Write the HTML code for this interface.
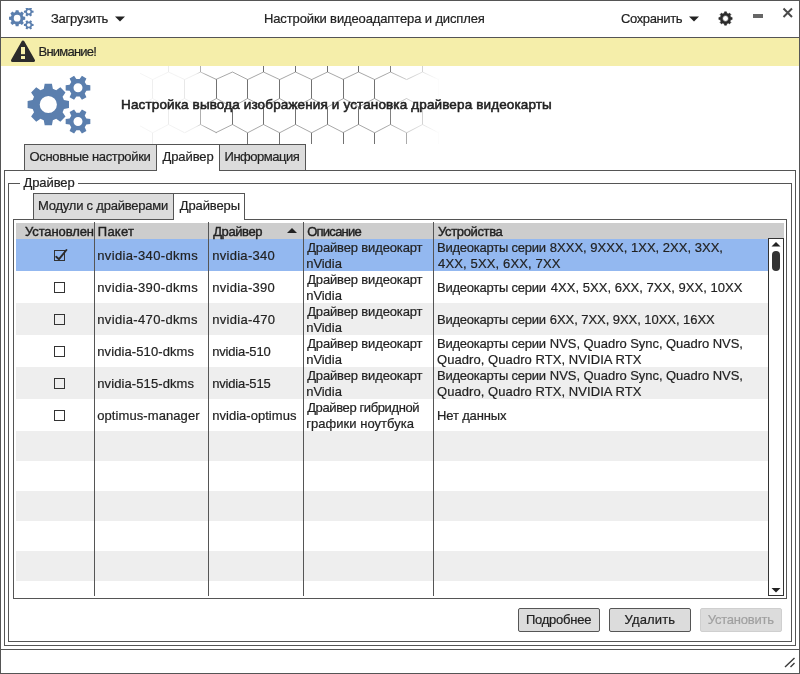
<!DOCTYPE html>
<html lang="ru">
<head>
<meta charset="utf-8">
<title>Настройки видеоадаптера и дисплея</title>
<style>
html,body{margin:0;padding:0;}
body{width:800px;height:674px;overflow:hidden;background:#fff;position:relative;
  font-family:"Liberation Sans",sans-serif;font-size:13px;color:#222;}
.abs{position:absolute;}
.t{position:absolute;white-space:nowrap;line-height:16px;height:16px;-webkit-text-stroke:0.2px #222;}
.ln{position:absolute;background:#555;}
.bx{position:absolute;box-sizing:border-box;border:1px solid #555;}
#win{position:absolute;left:0;top:0;width:798px;height:672px;border:1px solid #555;}
#warn{position:absolute;left:1px;top:38px;width:798px;height:28px;background:#f5eeaa;}
.tab{position:absolute;box-sizing:border-box;border:1px solid #555;background:#dcdcdc;}
.tab.act{background:#fff;border-bottom:none;}
.btn{position:absolute;box-sizing:border-box;border:1px solid #555;background:#dcdcdc;height:24px;top:608px;border-radius:2px;}
.row{position:absolute;left:16px;width:752px;}
.cb{position:absolute;left:54px;width:9px;height:9px;border:1px solid #333;}
</style>
</head>
<body>
<div id="root" style="position:absolute;left:0;top:0;width:800px;height:674px;will-change:transform;">
<div id="win"></div>
<svg class="abs" style="left:140px;top:66px" width="330" height="78" viewBox="140 66 330 78">
<defs><linearGradient id="hf" x1="140" x2="470" y1="0" y2="0" gradientUnits="userSpaceOnUse"><stop offset="0.03" stop-color="#fff" stop-opacity="0.1"/><stop offset="0.12" stop-color="#fff" stop-opacity="0.13"/><stop offset="0.17" stop-color="#fff" stop-opacity="0.2"/><stop offset="0.2" stop-color="#fff" stop-opacity="0.9"/><stop offset="0.742" stop-color="#fff" stop-opacity="0.9"/><stop offset="0.833" stop-color="#fff" stop-opacity="0.4"/><stop offset="0.909" stop-color="#fff" stop-opacity="0"/></linearGradient>
<mask id="hm" maskUnits="userSpaceOnUse" x="140" y="66" width="330" height="78"><rect x="140" y="66" width="330" height="78" fill="url(#hf)"/></mask></defs>
<g mask="url(#hm)" fill="none" stroke="#505050"><path d="M-21.5 60.0L-21.5 72.0M-5.5 79.5L-5.5 98.5M-21.5 107.0L-21.5 124.5M-5.5 132.7L-5.5 150.0M10.5 60.0L10.5 72.0M26.5 79.5L26.5 98.5M10.5 107.0L10.5 124.5M26.5 132.7L26.5 150.0M41.5 60.0L41.5 72.0M57.5 79.5L57.5 98.5M41.5 107.0L41.5 124.5M57.5 132.7L57.5 150.0M73.5 60.0L73.5 72.0M89.5 79.5L89.5 98.5M73.5 107.0L73.5 124.5M89.5 132.7L89.5 150.0M105.5 60.0L105.5 72.0M121.5 79.5L121.5 98.5M105.5 107.0L105.5 124.5M121.5 132.7L121.5 150.0M137.5 60.0L137.5 72.0M152.5 79.5L152.5 98.5M137.5 107.0L137.5 124.5M152.5 132.7L152.5 150.0M168.5 60.0L168.5 72.0M184.5 79.5L184.5 98.5M168.5 107.0L168.5 124.5M200.5 60.0L200.5 72.0M216.5 79.5L216.5 98.5M200.5 107.0L200.5 124.5M247.5 79.5L247.5 98.5M232.5 107.0L232.5 124.5M247.5 132.7L247.5 150.0M263.5 60.0L263.5 72.0M279.5 79.5L279.5 98.5M263.5 107.0L263.5 124.5M279.5 132.7L279.5 150.0M295.5 60.0L295.5 72.0M311.5 79.5L311.5 98.5M295.5 107.0L295.5 124.5M311.5 132.7L311.5 150.0M327.5 60.0L327.5 72.0M343.5 79.5L343.5 98.5M327.5 107.0L327.5 124.5M343.5 132.7L343.5 150.0M358.5 60.0L358.5 72.0M374.5 79.5L374.5 98.5M358.5 107.0L358.5 124.5M374.5 132.7L374.5 150.0M390.5 60.0L390.5 72.0M390.5 107.0L390.5 124.5M406.5 132.7L406.5 150.0M422.5 60.0L422.5 72.0M438.5 79.5L438.5 98.5M422.5 107.0L422.5 124.5M438.5 132.7L438.5 150.0M454.5 60.0L454.5 72.0M469.5 79.5L469.5 98.5M454.5 107.0L454.5 124.5M469.5 132.7L469.5 150.0M485.5 60.0L485.5 72.0M501.5 79.5L501.5 98.5M485.5 107.0L485.5 124.5M501.5 132.7L501.5 150.0M517.5 60.0L517.5 72.0M533.5 79.5L533.5 98.5M517.5 107.0L517.5 124.5M533.5 132.7L533.5 150.0M549.5 60.0L549.5 72.0M564.5 79.5L564.5 98.5M549.5 107.0L549.5 124.5M564.5 132.7L564.5 150.0M580.5 60.0L580.5 72.0M596.5 79.5L596.5 98.5M580.5 107.0L580.5 124.5M596.5 132.7L596.5 150.0" stroke-width="0.9"/><path d="M-21.5 72.0L-5.5 79.5M-21.5 72.0L-37.2 79.5M-5.5 98.5L10.2 107.0M-5.5 98.5L-21.5 107.0M-21.5 124.5L-5.5 132.7M-21.5 124.5L-37.2 132.7M10.5 72.0L26.5 79.5M10.5 72.0L-5.2 79.5M26.5 98.5L42.2 107.0M26.5 98.5L10.5 107.0M10.5 124.5L26.5 132.7M10.5 124.5L-5.2 132.7M41.5 72.0L57.5 79.5M41.5 72.0L25.8 79.5M57.5 98.5L73.2 107.0M57.5 98.5L41.5 107.0M41.5 124.5L57.5 132.7M41.5 124.5L25.8 132.7M73.5 72.0L89.5 79.5M73.5 72.0L57.8 79.5M89.5 98.5L105.2 107.0M89.5 98.5L73.5 107.0M73.5 124.5L89.5 132.7M73.5 124.5L57.8 132.7M105.5 72.0L121.5 79.5M105.5 72.0L89.8 79.5M121.5 98.5L137.2 107.0M121.5 98.5L105.5 107.0M105.5 124.5L121.5 132.7M105.5 124.5L89.8 132.7M137.5 72.0L152.5 79.5M137.5 72.0L120.8 79.5M152.5 98.5L169.2 107.0M152.5 98.5L137.5 107.0M137.5 124.5L152.5 132.7M137.5 124.5L120.8 132.7M168.5 72.0L184.5 79.5M168.5 72.0L152.8 79.5M184.5 98.5L200.2 107.0M184.5 98.5L168.5 107.0M168.5 124.5L184.5 132.7M168.5 124.5L152.8 132.7M200.5 72.0L216.5 79.5M200.5 72.0L184.8 79.5M216.5 98.5L232.2 107.0M216.5 98.5L200.5 107.0M200.5 124.5L216.5 132.7M200.5 124.5L184.8 132.7M232.5 72.0L247.5 79.5M232.5 72.0L215.8 79.5M247.5 98.5L264.2 107.0M247.5 98.5L232.5 107.0M232.5 124.5L247.5 132.7M232.5 124.5L215.8 132.7M263.5 72.0L279.5 79.5M263.5 72.0L247.8 79.5M279.5 98.5L295.2 107.0M279.5 98.5L263.5 107.0M263.5 124.5L279.5 132.7M263.5 124.5L247.8 132.7M295.5 72.0L311.5 79.5M295.5 72.0L279.8 79.5M311.5 98.5L327.2 107.0M311.5 98.5L295.5 107.0M295.5 124.5L311.5 132.7M295.5 124.5L279.8 132.7M327.5 72.0L343.5 79.5M327.5 72.0L311.8 79.5M343.5 98.5L359.2 107.0M343.5 98.5L327.5 107.0M327.5 124.5L343.5 132.7M327.5 124.5L311.8 132.7M358.5 72.0L374.5 79.5M358.5 72.0L342.8 79.5M374.5 98.5L390.2 107.0M374.5 98.5L358.5 107.0M358.5 124.5L374.5 132.7M358.5 124.5L342.8 132.7M390.5 72.0L406.5 79.5M390.5 72.0L374.8 79.5M406.5 98.5L422.2 107.0M406.5 98.5L390.5 107.0M390.5 124.5L406.5 132.7M390.5 124.5L374.8 132.7M422.5 72.0L438.5 79.5M422.5 72.0L406.8 79.5M438.5 98.5L454.2 107.0M438.5 98.5L422.5 107.0M422.5 124.5L438.5 132.7M422.5 124.5L406.8 132.7M454.5 72.0L469.5 79.5M454.5 72.0L437.8 79.5M469.5 98.5L486.2 107.0M469.5 98.5L454.5 107.0M454.5 124.5L469.5 132.7M454.5 124.5L437.8 132.7M485.5 72.0L501.5 79.5M485.5 72.0L469.8 79.5M501.5 98.5L517.2 107.0M501.5 98.5L485.5 107.0M485.5 124.5L501.5 132.7M485.5 124.5L469.8 132.7M517.5 72.0L533.5 79.5M517.5 72.0L501.8 79.5M533.5 98.5L549.2 107.0M533.5 98.5L517.5 107.0M517.5 124.5L533.5 132.7M517.5 124.5L501.8 132.7M549.5 72.0L564.5 79.5M549.5 72.0L532.8 79.5M564.5 98.5L581.2 107.0M564.5 98.5L549.5 107.0M549.5 124.5L564.5 132.7M549.5 124.5L532.8 132.7M580.5 72.0L596.5 79.5M580.5 72.0L564.8 79.5M596.5 98.5L612.2 107.0M596.5 98.5L580.5 107.0M580.5 124.5L596.5 132.7M580.5 124.5L564.8 132.7" stroke-width="0.7" stroke-opacity="0.8"/></g>
</svg>
<div class="ln" style="left:1px;top:37px;width:798px;height:1px;"></div>
<svg class="abs" style="left:8.3px;top:8.4px" width="27" height="24" viewBox="25 81 69 56"><path fill="#5b7fae" fill-rule="evenodd" d="M63.95 99.96 L68.99 100.88 L68.99 108.12 L63.95 109.04 L62.58 112.36 L65.48 116.57 L60.37 121.68 L56.16 118.78 L52.84 120.15 L51.92 125.19 L44.68 125.19 L43.76 120.15 L40.44 118.78 L36.23 121.68 L31.12 116.57 L34.02 112.36 L32.65 109.04 L27.61 108.12 L27.61 100.88 L32.65 99.96 L34.02 96.64 L31.12 92.43 L36.23 87.32 L40.44 90.22 L43.76 88.85 L44.68 83.81 L51.92 83.81 L52.84 88.85 L56.16 90.22 L60.37 87.32 L65.48 92.43 L62.58 96.64Z M56.90 104.50 A8.6 8.6 0 1 0 39.70 104.50 A8.6 8.6 0 1 0 56.90 104.50Z M86.40 84.85 L90.33 85.21 L90.33 90.39 L86.40 90.75 L84.75 93.60 L86.41 97.18 L81.92 99.77 L79.65 96.55 L76.35 96.55 L74.08 99.77 L69.59 97.18 L71.25 93.60 L69.60 90.75 L65.67 90.39 L65.67 85.21 L69.60 84.85 L71.25 82.00 L69.59 78.42 L74.08 75.83 L76.35 79.05 L79.65 79.05 L81.92 75.83 L86.41 78.42 L84.75 82.00Z M82.50 87.80 A4.5 4.5 0 1 0 73.50 87.80 A4.5 4.5 0 1 0 82.50 87.80Z M86.40 118.55 L90.33 118.91 L90.33 124.09 L86.40 124.45 L84.75 127.30 L86.41 130.88 L81.92 133.47 L79.65 130.25 L76.35 130.25 L74.08 133.47 L69.59 130.88 L71.25 127.30 L69.60 124.45 L65.67 124.09 L65.67 118.91 L69.60 118.55 L71.25 115.70 L69.59 112.12 L74.08 109.53 L76.35 112.75 L79.65 112.75 L81.92 109.53 L86.41 112.12 L84.75 115.70Z M82.50 121.50 A4.5 4.5 0 1 0 73.50 121.50 A4.5 4.5 0 1 0 82.50 121.50Z"/></svg>
<svg class="abs" style="left:115px;top:16px" width="10" height="6"><path d="M0 0.5H10L5 5.5Z" fill="#222"/></svg>
<svg class="abs" style="left:689px;top:16px" width="10" height="6"><path d="M0 0.5H10L5 5.5Z" fill="#222"/></svg>
<svg class="abs" style="left:718px;top:11px" width="15" height="15" viewBox="-7.5 -7.5 15 15"><path fill="#2b2b2b" fill-rule="evenodd" stroke="#2b2b2b" stroke-width="0.6" stroke-linejoin="round" d="M5.14 -1.28 L6.63 -1.00 L6.63 1.00 L5.14 1.28 L4.54 2.73 L5.39 3.98 L3.98 5.39 L2.73 4.54 L1.28 5.14 L1.00 6.63 L-1.00 6.63 L-1.28 5.14 L-2.73 4.54 L-3.98 5.39 L-5.39 3.98 L-4.54 2.73 L-5.14 1.28 L-6.63 1.00 L-6.63 -1.00 L-5.14 -1.28 L-4.54 -2.73 L-5.39 -3.98 L-3.98 -5.39 L-2.73 -4.54 L-1.28 -5.14 L-1.00 -6.63 L1.00 -6.63 L1.28 -5.14 L2.73 -4.54 L3.98 -5.39 L5.39 -3.98 L4.54 -2.73Z M2.90 0.00 A2.9 2.9 0 1 0 -2.90 0.00 A2.9 2.9 0 1 0 2.90 0.00Z"/></svg>
<div class="abs" style="left:753px;top:14px;width:10px;height:4px;background:#666;"></div>
<svg class="abs" style="left:782px;top:7px" width="12" height="12"><path d="M1.5 1.5L10 10M10 1.5L1.5 10" stroke="#4a4a4a" stroke-width="2" fill="none"/></svg>
<div id="warn"></div>
<svg class="abs" style="left:11px;top:40px" width="24" height="22" viewBox="0 0 24 22"><path d="M12 2L22.5 20.4H1.5Z" fill="#2b2b2b" stroke="#2b2b2b" stroke-width="3" stroke-linejoin="round"/><rect x="10" y="7" width="4" height="7.2" fill="#f5eeaa"/><rect x="10" y="16" width="4" height="3" fill="#f5eeaa"/></svg>
<svg class="abs" style="left:20px;top:70px" width="80" height="70" viewBox="20 70 80 70"><path fill="#5b7fae" fill-rule="evenodd" d="M63.95 99.96 L68.99 100.88 L68.99 108.12 L63.95 109.04 L62.58 112.36 L65.48 116.57 L60.37 121.68 L56.16 118.78 L52.84 120.15 L51.92 125.19 L44.68 125.19 L43.76 120.15 L40.44 118.78 L36.23 121.68 L31.12 116.57 L34.02 112.36 L32.65 109.04 L27.61 108.12 L27.61 100.88 L32.65 99.96 L34.02 96.64 L31.12 92.43 L36.23 87.32 L40.44 90.22 L43.76 88.85 L44.68 83.81 L51.92 83.81 L52.84 88.85 L56.16 90.22 L60.37 87.32 L65.48 92.43 L62.58 96.64Z M56.90 104.50 A8.6 8.6 0 1 0 39.70 104.50 A8.6 8.6 0 1 0 56.90 104.50Z M86.40 84.85 L90.33 85.21 L90.33 90.39 L86.40 90.75 L84.75 93.60 L86.41 97.18 L81.92 99.77 L79.65 96.55 L76.35 96.55 L74.08 99.77 L69.59 97.18 L71.25 93.60 L69.60 90.75 L65.67 90.39 L65.67 85.21 L69.60 84.85 L71.25 82.00 L69.59 78.42 L74.08 75.83 L76.35 79.05 L79.65 79.05 L81.92 75.83 L86.41 78.42 L84.75 82.00Z M82.50 87.80 A4.5 4.5 0 1 0 73.50 87.80 A4.5 4.5 0 1 0 82.50 87.80Z M86.40 118.55 L90.33 118.91 L90.33 124.09 L86.40 124.45 L84.75 127.30 L86.41 130.88 L81.92 133.47 L79.65 130.25 L76.35 130.25 L74.08 133.47 L69.59 130.88 L71.25 127.30 L69.60 124.45 L65.67 124.09 L65.67 118.91 L69.60 118.55 L71.25 115.70 L69.59 112.12 L74.08 109.53 L76.35 112.75 L79.65 112.75 L81.92 109.53 L86.41 112.12 L84.75 115.70Z M82.50 121.50 A4.5 4.5 0 1 0 73.50 121.50 A4.5 4.5 0 1 0 82.50 121.50Z"/></svg>
<div class="bx" style="left:4px;top:170px;width:792px;height:476px;"></div>
<div class="tab" style="left:24px;top:144px;width:133px;height:27px;"></div>
<div class="tab" style="left:219px;top:144px;width:87px;height:27px;"></div>
<div class="tab act" style="left:156px;top:144px;width:64px;height:27px;"></div>
<div class="bx" style="left:8px;top:183px;width:784px;height:459px;"></div>
<div class="abs" style="left:20px;top:180px;width:58px;height:8px;background:#fff;"></div>
<div class="bx" style="left:13px;top:219px;width:774px;height:380px;"></div>
<div class="tab" style="left:33px;top:193px;width:141px;height:27px;"></div>
<div class="tab act" style="left:173px;top:193px;width:72px;height:27px;"></div>
<div class="abs" style="left:16px;top:223px;width:768px;height:16px;background:#cdcdcd;"></div>
<div class="row" style="top:239px;height:32px;background:#93b8f0;"></div>
<div class="row" style="top:303px;height:32px;background:#eee;"></div>
<div class="row" style="top:367px;height:32px;background:#eee;"></div>
<div class="row" style="top:431px;height:30px;background:#eee;"></div>
<div class="row" style="top:491px;height:30px;background:#eee;"></div>
<div class="row" style="top:551px;height:30px;background:#eee;"></div>
<div class="ln" style="left:94px;top:222px;width:1px;height:374px;"></div>
<div class="ln" style="left:208px;top:222px;width:1px;height:374px;"></div>
<div class="ln" style="left:303px;top:222px;width:1px;height:374px;"></div>
<div class="ln" style="left:433px;top:222px;width:1px;height:374px;"></div>
<svg class="abs" style="left:287px;top:228px" width="10" height="6"><path d="M0 5H10L5 0Z" fill="#222"/></svg>
<div class="cb" style="top:250px;"></div>
<div class="cb" style="top:282px;"></div>
<div class="cb" style="top:314px;"></div>
<div class="cb" style="top:346px;"></div>
<div class="cb" style="top:378px;"></div>
<div class="cb" style="top:410px;"></div>
<svg class="abs" style="left:54px;top:248px" width="14" height="14"><path d="M2.2 8.8L5 11.2L12.4 2" stroke="#2b2b2b" stroke-width="1.9" stroke-linecap="round" stroke-linejoin="round" fill="none"/></svg>
<div class="abs" style="left:768px;top:238px;width:14px;height:356px;border:1px solid #333;border-top:1px solid #333;background:#fff;"></div>
<svg class="abs" style="left:771px;top:242px" width="10" height="5"><path d="M0.5 4.5H9.5L5 0Z" fill="#222"/></svg>
<svg class="abs" style="left:771px;top:588px" width="10" height="5"><path d="M0.5 0H9.5L5 4.5Z" fill="#222"/></svg>
<div class="abs" style="left:772px;top:251px;width:8px;height:20px;border-radius:4px;background:#333;"></div>
<div class="btn" style="left:518px;width:82px;"></div>
<div class="btn" style="left:609px;width:82px;"></div>
<div class="btn" style="left:700px;width:82px;border-color:#cfcfcf;"></div>
<div class="ln" style="left:1px;top:649px;width:798px;height:1px;"></div>
<svg class="abs" style="left:783px;top:656px" width="14" height="14"><path d="M2 11L11.5 2M7.5 11L11.5 7" stroke="#3a3a3a" stroke-width="1.4" fill="none"/></svg>
<div class="t" id="t_load" style="left:51.0px;top:11px;letter-spacing:-0.250px;">Загрузить</div>
<div class="t" id="t_title" style="left:264.0px;top:11px;letter-spacing:-0.125px;">Настройки видеоадаптера и дисплея</div>
<div class="t" id="t_save" style="left:621.0px;top:11px;letter-spacing:-0.375px;">Сохранить</div>
<div class="t" id="t_warn" style="left:38.5px;top:44px;letter-spacing:-0.775px;">Внимание!</div>
<div class="t" id="t_head" style="left:121.0px;top:97px;letter-spacing:0.136px;font-size:13.5px;-webkit-text-stroke:0.55px #222;">Настройка вывода изображения и установка драйвера видеокарты</div>
<div class="t" id="t_tab1" style="left:29.5px;top:149px;letter-spacing:-0.324px;">Основные настройки</div>
<div class="t" id="t_tab2" style="left:162.5px;top:149px;letter-spacing:-0.083px;">Драйвер</div>
<div class="t" id="t_tab3" style="left:224.5px;top:149px;letter-spacing:-0.467px;">Информация</div>
<div class="t" id="t_grp" style="left:23.5px;top:175px;letter-spacing:-0.083px;">Драйвер</div>
<div class="t" id="t_itab1" style="left:38.0px;top:198px;letter-spacing:-0.222px;">Модули с драйверами</div>
<div class="t" id="t_itab2" style="left:179.7px;top:198px;letter-spacing:-0.100px;">Драйверы</div>
<div class="t" id="t_h1" style="left:25.0px;top:224px;letter-spacing:-0.111px;-webkit-text-stroke:0.4px #222;">Установлен</div>
<div class="t" id="t_h2" style="left:97.8px;top:224px;letter-spacing:0.250px;-webkit-text-stroke:0.4px #222;">Пакет</div>
<div class="t" id="t_h3" style="left:213.2px;top:224px;letter-spacing:-0.400px;-webkit-text-stroke:0.4px #222;">Драйвер</div>
<div class="t" id="t_h4" style="left:307.2px;top:224px;letter-spacing:-0.743px;-webkit-text-stroke:0.4px #222;">Описание</div>
<div class="t" id="t_h5" style="left:438.0px;top:224px;letter-spacing:-0.356px;-webkit-text-stroke:0.4px #222;">Устройства</div>
<div class="t" id="t_pk0" style="left:97.2px;top:248px;letter-spacing:0.364px;">nvidia-340-dkms</div>
<div class="t" id="t_dr0" style="left:212.2px;top:248px;letter-spacing:0.289px;">nvidia-340</div>
<div class="t" id="t_ds0a" style="left:307.2px;top:240px;letter-spacing:-0.150px;">Драйвер видеокарт</div>
<div class="t" id="t_ds0b" style="left:306.2px;top:256px;letter-spacing:-0.040px;">nVidia</div>
<div class="t" id="t_dv0a" style="left:437.0px;top:240px;letter-spacing:-0.233px;">Видеокарты серии</div>
<div class="t" id="t_dv0c" style="left:549.8px;top:240px;letter-spacing:0.018px;">8XXX, 9XXX, 1XX, 2XX, 3XX,</div>
<div class="t" id="t_dv0b" style="left:438.0px;top:256px;letter-spacing:0.147px;">4XX, 5XX, 6XX, 7XX</div>
<div class="t" id="t_pk1" style="left:97.2px;top:280px;letter-spacing:0.364px;">nvidia-390-dkms</div>
<div class="t" id="t_dr1" style="left:212.2px;top:280px;letter-spacing:0.289px;">nvidia-390</div>
<div class="t" id="t_ds1a" style="left:307.2px;top:272px;letter-spacing:-0.150px;">Драйвер видеокарт</div>
<div class="t" id="t_ds1b" style="left:306.2px;top:288px;letter-spacing:-0.040px;">nVidia</div>
<div class="t" id="t_dv1a" style="left:437.0px;top:280px;letter-spacing:-0.233px;">Видеокарты серии</div>
<div class="t" id="t_dv1c" style="left:550.8px;top:280px;letter-spacing:0.027px;">4XX, 5XX, 6XX, 7XX, 9XX, 10XX</div>
<div class="t" id="t_pk2" style="left:97.2px;top:312px;letter-spacing:0.357px;">nvidia-470-dkms</div>
<div class="t" id="t_dr2" style="left:212.2px;top:312px;letter-spacing:0.311px;">nvidia-470</div>
<div class="t" id="t_ds2a" style="left:307.2px;top:304px;letter-spacing:-0.150px;">Драйвер видеокарт</div>
<div class="t" id="t_ds2b" style="left:306.2px;top:320px;letter-spacing:-0.040px;">nVidia</div>
<div class="t" id="t_dv2a" style="left:437.0px;top:312px;letter-spacing:-0.233px;">Видеокарты серии</div>
<div class="t" id="t_dv2c" style="left:549.8px;top:312px;letter-spacing:-0.056px;">6XX, 7XX, 9XX, 10XX, 16XX</div>
<div class="t" id="t_pk3" style="left:97.2px;top:344px;letter-spacing:0.107px;">nvidia-510-dkms</div>
<div class="t" id="t_dr3" style="left:212.2px;top:344px;letter-spacing:-0.167px;">nvidia-510</div>
<div class="t" id="t_ds3a" style="left:307.2px;top:336px;letter-spacing:-0.150px;">Драйвер видеокарт</div>
<div class="t" id="t_ds3b" style="left:306.2px;top:352px;letter-spacing:-0.040px;">nVidia</div>
<div class="t" id="t_dv3a" style="left:437.0px;top:336px;letter-spacing:-0.233px;">Видеокарты серии</div>
<div class="t" id="t_dv3c" style="left:549.8px;top:336px;letter-spacing:-0.045px;">NVS, Quadro Sync, Quadro NVS,</div>
<div class="t" id="t_dv3b" style="left:437.0px;top:352px;letter-spacing:0.066px;">Quadro, Quadro RTX, NVIDIA RTX</div>
<div class="t" id="t_pk4" style="left:97.2px;top:376px;letter-spacing:0.107px;">nvidia-515-dkms</div>
<div class="t" id="t_dr4" style="left:212.2px;top:376px;letter-spacing:-0.167px;">nvidia-515</div>
<div class="t" id="t_ds4a" style="left:307.2px;top:368px;letter-spacing:-0.150px;">Драйвер видеокарт</div>
<div class="t" id="t_ds4b" style="left:306.2px;top:384px;letter-spacing:-0.040px;">nVidia</div>
<div class="t" id="t_dv4a" style="left:437.0px;top:368px;letter-spacing:-0.233px;">Видеокарты серии</div>
<div class="t" id="t_dv4c" style="left:549.8px;top:368px;letter-spacing:-0.045px;">NVS, Quadro Sync, Quadro NVS,</div>
<div class="t" id="t_dv4b" style="left:437.0px;top:384px;letter-spacing:0.066px;">Quadro, Quadro RTX, NVIDIA RTX</div>
<div class="t" id="t_pk5" style="left:97.2px;top:408px;letter-spacing:0.086px;">optimus-manager</div>
<div class="t" id="t_dr5" style="left:212.2px;top:408px;letter-spacing:0.031px;">nvidia-optimus</div>
<div class="t" id="t_ds5a" style="left:307.2px;top:400px;letter-spacing:-0.387px;">Драйвер гибридной</div>
<div class="t" id="t_ds5b" style="left:306.2px;top:416px;letter-spacing:0.037px;">графики ноутбука</div>
<div class="t" id="t_dv5a" style="left:437.0px;top:408px;letter-spacing:-0.144px;">Нет данных</div>
<div class="t" id="t_b1" style="left:526.0px;top:612px;letter-spacing:-0.250px;">Подробнее</div>
<div class="t" id="t_b2" style="left:624.6px;top:612px;letter-spacing:0.133px;">Удалить</div>
<div class="t" id="t_b3" style="left:707.8px;top:612px;letter-spacing:-0.233px;color:#a0a0a0;-webkit-text-stroke:0.2px #a0a0a0;">Установить</div>
</div>
</body>
</html>
